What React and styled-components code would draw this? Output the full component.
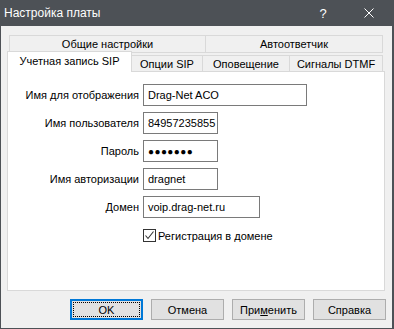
import React from "react";
import styled, { createGlobalStyle } from "styled-components";

const Global = createGlobalStyle`
  html, body { margin: 0; padding: 0; background: #4d5156; }
  body {
    font-family: "Segoe UI", "Liberation Sans", Arial, sans-serif;
    font-size: 11px;
    color: #000;
  }
  * { box-sizing: border-box; }
`;

const Window = styled.div`
  width: 394px;
  height: 329px;
  background: #4d5156;
  display: flex;
  flex-direction: column;
  padding: 0 2px 1px 1px;
`;

const TitleBar = styled.div`
  height: 26px;
  display: flex;
  align-items: center;
  color: #fff;
  flex-shrink: 0;
`;

const Title = styled.div`
  flex: 1;
  padding-left: 3px;
  font-size: 12px;
`;

const CaptionButton = styled.div`
  width: 46px;
  height: 26px;
  display: flex;
  align-items: center;
  justify-content: center;
  font-size: 13px;
  color: #fff;
`;

const Body = styled.div`
  flex: 1;
  background: #f0f0f0;
  display: flex;
  flex-direction: column;
  padding: 7px 6px 8px 6px;
`;

const TabArea = styled.div`
  display: flex;
  flex-direction: column;
  margin-right: 1px;
`;

const TabRow = styled.div`
  display: flex;
  align-items: flex-end;
  height: ${(p) => p.$h}px;
  padding-left: ${(p) => p.$pl || 0}px;
`;

const Tab = styled.div`
  width: ${(p) => p.$w}px;
  height: ${(p) => (p.$full ? 18 : 16)}px;
  border: 1px solid #d9d9d9;
  border-bottom: ${(p) => (p.$full ? "1px solid #d9d9d9" : "none")};
  margin-left: ${(p) => (p.$first ? 0 : -1)}px;
  background: #f0f0f0;
  display: flex;
  align-items: center;
  justify-content: center;
  white-space: nowrap;
`;

const ActiveTab = styled.div`
  width: ${(p) => p.$w}px;
  height: 21px;
  margin-top: -2px;
  margin-bottom: -1px;
  border: 1px solid #d9d9d9;
  border-bottom: none;
  background: #fff;
  position: relative;
  z-index: 1;
  display: flex;
  align-items: center;
  justify-content: center;
  padding-bottom: 3px;
  white-space: nowrap;
`;

const Panel = styled.div`
  flex: 1;
  background: #fff;
  border: 1px solid #d9d9d9;
  margin-right: 1px;
  padding-top: 12px;
`;

const Form = styled.div`
  display: grid;
  grid-template-columns: 131px max-content;
  column-gap: 4px;
  row-gap: 6px;
  align-items: center;
`;

const Label = styled.div`
  text-align: right;
  white-space: nowrap;
`;

const Input = styled.div`
  width: ${(p) => p.$w}px;
  height: 22px;
  border: 1px solid #7a7a7a;
  background: #fff;
  display: flex;
  align-items: center;
  padding-left: 4px;
  white-space: nowrap;
  overflow: hidden;
`;

const Dots = styled.span`
  font-size: 10px;
  letter-spacing: 0.4px;
  padding-top: 1px;
`;

const CheckRow = styled.div`
  grid-column: 2;
  margin-top: 5px;
  display: flex;
  align-items: center;
`;

const CheckBox = styled.div`
  width: 13px;
  height: 13px;
  border: 1px solid #333;
  background: #fff;
  display: flex;
  align-items: center;
  justify-content: center;
  margin-right: 2px;
`;

const ButtonRow = styled.div`
  display: flex;
  justify-content: flex-end;
  gap: 8px;
  margin-top: 8px;
`;

const Button = styled.div`
  width: 73px;
  height: 21px;
  background: #e1e1e1;
  border: ${(p) => (p.$default ? "2px solid #0078d7" : "1px solid #adadad")};
  padding: ${(p) => (p.$default ? "1px" : "0")};
  display: flex;
  align-items: stretch;
  justify-content: stretch;
`;

const ButtonInner = styled.div`
  flex: 1;
  display: flex;
  align-items: center;
  justify-content: center;
  border: ${(p) => (p.$focus ? "1px dotted #000" : "none")};
  white-space: nowrap;
`;

const fields = [
  { label: "Имя для отображения", value: "Drag-Net ACO", w: 164 },
  { label: "Имя пользователя", value: "84957235855", w: 75 },
  { label: "Пароль", password: true, w: 75 },
  { label: "Имя авторизации", value: "dragnet", w: 75 },
  { label: "Домен", value: "voip.drag-net.ru", w: 117 },
];

export default function App() {
  return (
    <>
      <Global />
      <Window>
        <TitleBar>
          <Title>Настройка платы</Title>
          <CaptionButton>?</CaptionButton>
          <CaptionButton>
            <svg width="10" height="10" viewBox="0 0 10 10">
              <path d="M0.5 0.5 L9.5 9.5 M9.5 0.5 L0.5 9.5" stroke="#fff" strokeWidth="1" />
            </svg>
          </CaptionButton>
        </TitleBar>
        <Body>
          <TabArea>
            <TabRow $h={20} $pl={2}>
              <Tab $w={197} $full $first>Общие настройки</Tab>
              <Tab $w={178} $full>Автоответчик</Tab>
            </TabRow>
            <TabRow $h={18}>
              <ActiveTab $w={125}>Учетная запись SIP</ActiveTab>
              <Tab $w={72}>Опции SIP</Tab>
              <Tab $w={88}>Оповещение</Tab>
              <Tab $w={94}>Сигналы DTMF</Tab>
            </TabRow>
          </TabArea>
          <Panel>
            <Form>
              {fields.map((f) => (
                <React.Fragment key={f.label}>
                  <Label>{f.label}</Label>
                  <Input $w={f.w}>
                    {f.password ? <Dots>●●●●●●●</Dots> : f.value}
                  </Input>
                </React.Fragment>
              ))}
              <CheckRow>
                <CheckBox>
                  <svg width="11" height="11" viewBox="0 0 11 11">
                    <path d="M1.5 5.5 L4 8.5 L9.5 1.5" stroke="#333" strokeWidth="1.1" fill="none" />
                  </svg>
                </CheckBox>
                Регистрация в домене
              </CheckRow>
            </Form>
          </Panel>
          <ButtonRow>
            <Button $default>
              <ButtonInner $focus>OK</ButtonInner>
            </Button>
            <Button>
              <ButtonInner>Отмена</ButtonInner>
            </Button>
            <Button>
              <ButtonInner>
                При<u>м</u>енить
              </ButtonInner>
            </Button>
            <Button>
              <ButtonInner>Справка</ButtonInner>
            </Button>
          </ButtonRow>
        </Body>
      </Window>
    </>
  );
}
